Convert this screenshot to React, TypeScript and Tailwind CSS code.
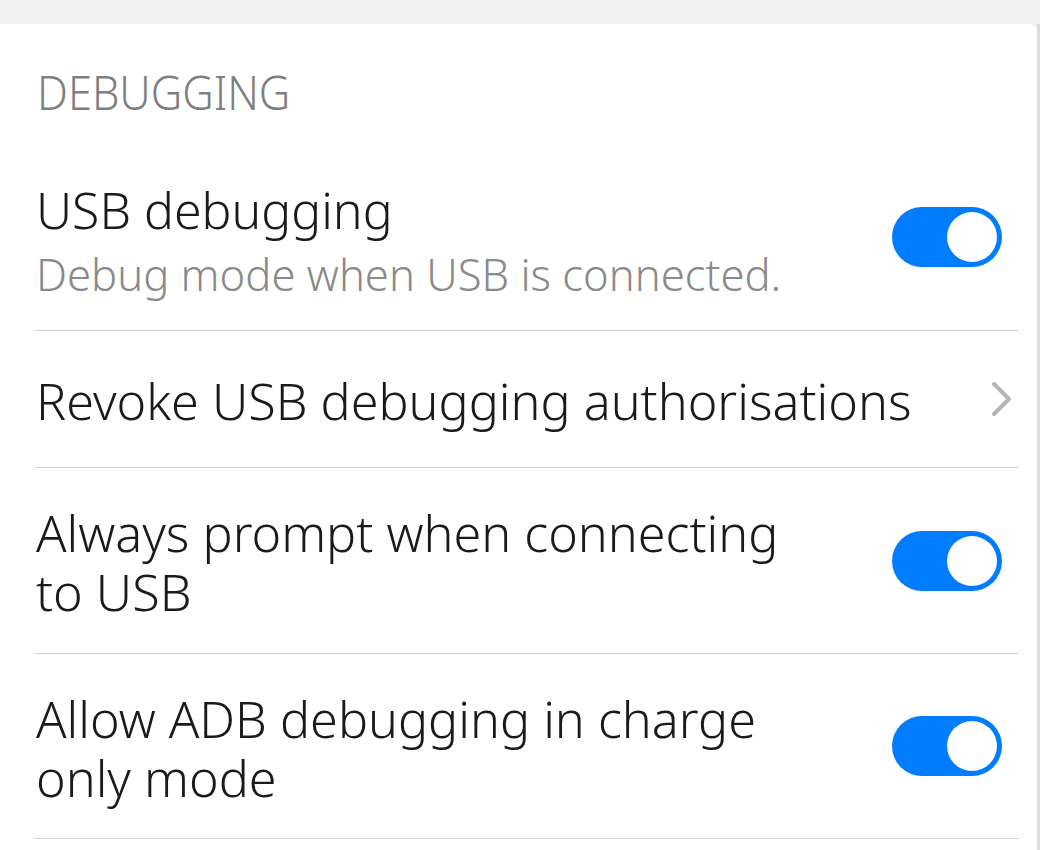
import React from "react";

function Toggle() {
  return (
    <div className="flex h-[60px] w-[110px] shrink-0 items-center justify-end rounded-full bg-[#007dff] p-[5px]">
      <div className="h-[50px] w-[50px] rounded-full bg-white" />
    </div>
  );
}

function Chevron() {
  return (
    <svg width="21" height="36" viewBox="0 0 21 36" className="shrink-0" fill="none">
      <polyline points="3,3 18,18 3,33" stroke="#b5b5b5" strokeWidth="4" strokeLinecap="round" strokeLinejoin="round" />
    </svg>
  );
}

function Divider() {
  return <div className="ml-[35px] mr-[18px] h-px bg-[#d2d2d2]" />;
}

export default function App() {
  return (
    <div className="flex min-h-[850px] w-[1040px] flex-col bg-[#f2f2f2] font-['Noto_Sans',sans-serif]">
      <div className="h-[24px] shrink-0" />
      <div className="flex flex-1">
        <div className="flex-1 overflow-hidden rounded-tr-[8px] bg-white">
          {/* Header */}
          <div className="h-[120px] pl-[37px] pt-[38px]">
            <span className="inline-block origin-left scale-x-[0.905] text-[48px] leading-[59px] font-light text-[#7f7f7f]">
              DEBUGGING
            </span>
          </div>

          {/* USB debugging */}
          <div className="flex h-[186px] items-center pl-[36px] pr-[35px]">
            <div className="flex-1 pt-[6px]">
              <div className="text-[50px] leading-[66px] font-light text-[#1a1a1a]">USB debugging</div>
              <div className="mt-[2px] text-[43.6px] leading-[58px] font-light text-[#8a8a8a]">
                Debug mode when USB is connected.
              </div>
            </div>
            <Toggle />
          </div>
          <Divider />

          {/* Revoke */}
          <div className="flex h-[136px] items-center pl-[36px] pr-[25px]">
            <div className="flex-1 pt-[2px] text-[50.3px] leading-[59px] font-light text-[#1a1a1a]">
              Revoke USB debugging authorisations
            </div>
            <Chevron />
          </div>
          <Divider />

          {/* Always prompt */}
          <div className="flex h-[185px] items-center pl-[36px] pr-[35px]">
            <div className="flex-1 pt-[3px] text-[50.3px] font-light text-[#1a1a1a]">
              <div className="leading-[59px]">Always prompt when connecting</div>
              <div className="leading-[59px]">to USB</div>
            </div>
            <Toggle />
          </div>
          <Divider />

          {/* Allow ADB */}
          <div className="flex h-[184px] items-center pl-[36px] pr-[35px]">
            <div className="flex-1 pt-[3px] text-[50.3px] font-light text-[#1a1a1a]">
              <div className="leading-[59px]">Allow ADB debugging in charge</div>
              <div className="leading-[59px]">only mode</div>
            </div>
            <Toggle />
          </div>
          <Divider />
          <div className="h-[40px]" />
        </div>
        <div className="w-[3px] shrink-0 bg-[#dcdcdc]" />
      </div>
    </div>
  );
}
